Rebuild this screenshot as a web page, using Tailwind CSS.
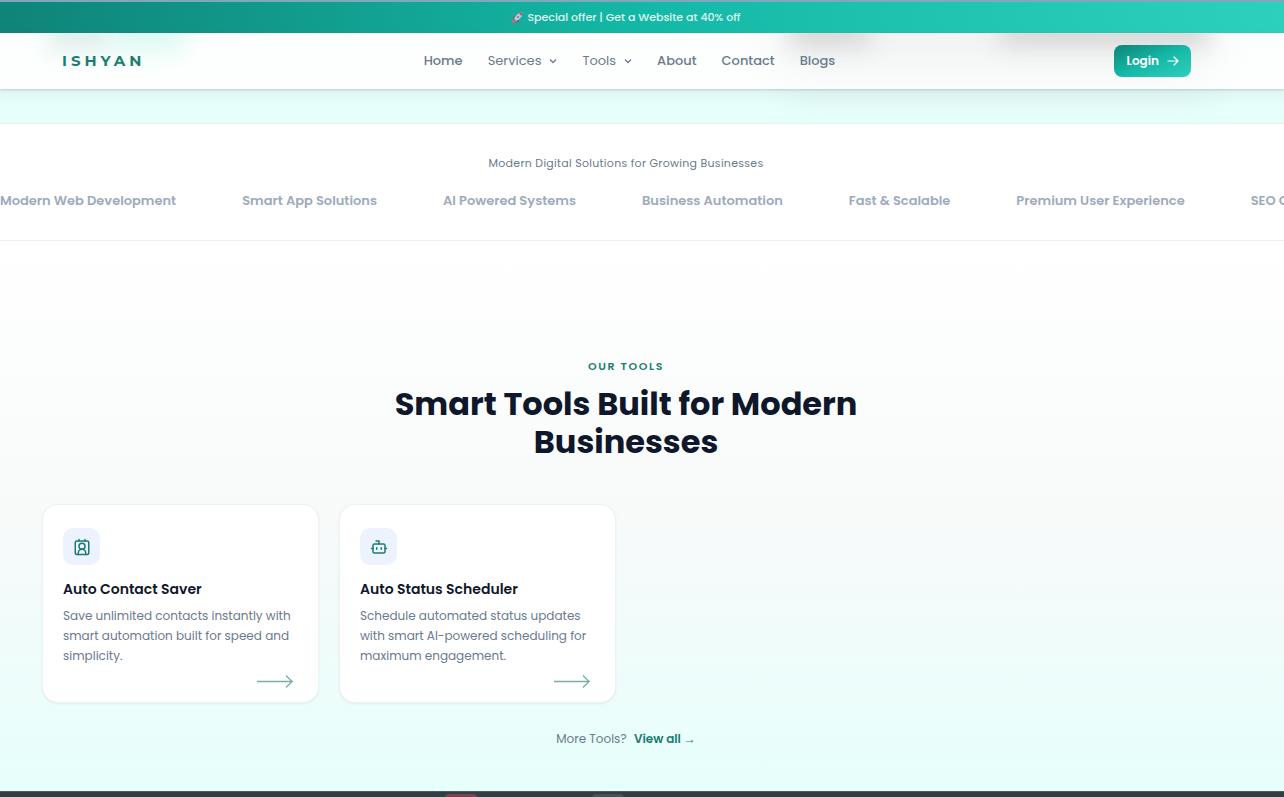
<!DOCTYPE html>
<html lang="en">
<head>
    <meta charset="UTF-8">
    <meta name="viewport" content="width=device-width, initial-scale=1.0">
    <title>ISHYAN</title>
    <script src="https://cdn.jsdelivr.net/npm/@tailwindcss/browser@4"></script>
</head>
<body class="font-[Poppins,Inter,sans-serif] bg-[#e6fffb] text-[#6b7a8d] overflow-x-hidden">
    <!-- Offer bar -->
    <div class="h-[33px] border-t-2 border-[#7ba9bd] bg-linear-to-r from-[#0f8478] via-[#14b8a6] to-[#2dd0bd] text-white/85 text-[11px] font-medium pr-8 flex items-center justify-center gap-1">
        <svg class="size-3" viewBox="0 0 24 24" aria-hidden="true">
            <path d="M3 12 9 7l8 8-5 7-2-6-4-3z" fill="#b0355c"/>
            <path d="M23 1c-8 0-13 5-17 12l5 5c7-4 12-9 12-17z" fill="#b9c8d6"/>
            <path d="M23 1c-3 0-5 1-7 2l5 5c1-2 2-4 2-7z" fill="#cf4866"/>
            <circle cx="14" cy="10" r="2" fill="#4d8fb0"/>
            <path d="M5 15c-3 1-3 4-4 8 4-1 7-1 8-4z" fill="#d8607c"/>
        </svg>
        <span>Special offer | Get a Website at 40% off</span>
    </div>

    <!-- Navbar -->
    <header class="relative z-10 h-14 bg-[#fcfffe] shadow-sm shadow-teal-900/15">
        <div class="absolute inset-0 overflow-hidden" aria-hidden="true">
            <div class="absolute left-12 -top-4 w-16 h-8 bg-[#dbeeea] blur-md"></div>
            <div class="absolute left-28 -top-4 w-18 h-8 bg-[#d8f8f1] blur-md"></div>
            <div class="absolute left-[780px] -top-8 w-[430px] h-16 bg-[#f0f2f2] blur-xl"></div>
            <div class="absolute left-[790px] -top-4 w-20 h-7 bg-[#d4d4d4] blur-md"></div>
            <div class="absolute left-[1000px] -top-4 w-52 h-7 bg-[#d4d4d4] blur-md"></div>
        </div>
        <div class="relative h-full pl-[62px] pr-[93px] flex items-center justify-between">
            <a href="#" class="w-[120px] font-[Montserrat,Lato,sans-serif] font-bold text-[15px] tracking-[4px] text-[#1c7c70]">ISHYAN</a>
            <nav class="flex items-center gap-[25px] text-[13px] font-medium">
                <a href="#">Home</a>
                <button class="flex items-center gap-2 font-normal">Services
                    <svg class="size-2" viewBox="0 0 8 8" fill="none" stroke="currentColor" stroke-width="1.3"><path d="M1 2.500 4 5.500 7 2.500"/></svg>
                </button>
                <button class="flex items-center gap-2 font-normal">Tools
                    <svg class="size-2" viewBox="0 0 8 8" fill="none" stroke="currentColor" stroke-width="1.3"><path d="M1 2.500 4 5.500 7 2.500"/></svg>
                </button>
                <a href="#">About</a>
                <a href="#">Contact</a>
                <a href="#">Blogs</a>
            </nav>
            <div class="w-[114px] flex justify-end">
                <a href="#" class="h-8 px-3 rounded-lg bg-linear-to-br from-[#0f8478] via-[#14b8a6] to-[#2dd0bd] text-white text-xs font-semibold flex items-center gap-2">Login
                    <svg class="size-3" viewBox="0 0 12 12" fill="none" stroke="currentColor" stroke-width="1.2" stroke-linecap="round" stroke-linejoin="round"><path d="M1 6h10M7 2l4 4-4 4"/></svg>
                </a>
            </div>
        </div>
    </header>

    <!-- Bottom edge of the hero -->
    <div class="relative h-[34px] overflow-hidden">
        <div class="absolute left-[790px] -top-6 w-[420px] h-7 bg-[#d6ece8] blur-lg"></div>
        <div class="h-4 bg-linear-to-b from-[#dff5f1] to-transparent"></div>
    </div>

    <!-- Solutions strip -->
    <section class="h-[118px] bg-white border-y border-slate-200/70 pt-[31px] overflow-hidden">
        <p class="pr-8 text-center text-[11px] leading-4 tracking-wide">Modern Digital Solutions for Growing Businesses</p>
        <div class="mt-5 flex gap-[66px] whitespace-nowrap text-[13px] leading-5 font-semibold text-[#9dabbd]">
            <span>Modern Web Development</span>
            <span>Smart App Solutions</span>
            <span>AI Powered Systems</span>
            <span>Business Automation</span>
            <span>Fast &amp; Scalable</span>
            <span>Premium User Experience</span>
            <span>SEO Optimized</span>
        </div>
    </section>

    <!-- Tools -->
    <section class="h-[550px] pt-[117px] bg-linear-to-b from-white via-[#f8fafa] to-[#e6fffb]">
        <div class="pr-8 text-center">
            <p class="text-[11px] leading-4 font-semibold tracking-[0.15em] text-[#1c7c70]">OUR TOOLS</p>
            <h2 class="mt-[11px] mx-auto max-w-[500px] text-[32px] leading-[38px] font-bold text-slate-900">Smart Tools Built for Modern Businesses</h2>
        </div>
        <div class="mt-[43px] pl-[42px] pr-[74px] grid grid-cols-4 gap-5">
            <a href="#" class="h-[199px] bg-white border border-slate-200/60 rounded-2xl shadow-sm shadow-black/5 px-5 pt-[23px] flex flex-col">
                <span class="size-[37px] rounded-[10px] bg-[#edf2ff] text-[#1c7c70] flex items-center justify-center">
                    <svg class="size-[18px]" viewBox="0 0 24 24" fill="none" stroke="currentColor" stroke-width="2" stroke-linejoin="round" stroke-linecap="round"><rect x="3" y="4" width="18" height="18" rx="2"/><path d="M8 2v2M16 2v2M7 22v-2a5 5 0 0 1 10 0v2"/><circle cx="12" cy="11" r="4"/></svg>
                </span>
                <h3 class="mt-[14px] text-sm leading-5 font-semibold text-slate-900">Auto Contact Saver</h3>
                <p class="mt-[7px] text-xs leading-5">Save unlimited contacts instantly with smart automation built for speed and simplicity.</p>
                <svg class="mt-2 mr-1 w-[38px] h-[14px] self-end text-[#1c7c70]/60" viewBox="0 0 38 14" fill="none" stroke="currentColor" stroke-width="1.3"><path d="M1 7.500h36M30 1.500l6 6-6 6"/></svg>
            </a>
            <a href="#" class="h-[199px] bg-white border border-slate-200/60 rounded-2xl shadow-sm shadow-black/5 px-5 pt-[23px] flex flex-col">
                <span class="size-[37px] rounded-[10px] bg-[#edf2ff] text-[#1c7c70] flex items-center justify-center">
                    <svg class="size-[18px]" viewBox="0 0 24 24" fill="none" stroke="currentColor" stroke-width="2" stroke-linejoin="round" stroke-linecap="round"><path d="M12 8V4H8"/><rect x="4" y="8" width="16" height="12" rx="2"/><path d="M2 14h2M20 14h2M15 13v2M9 13v2"/></svg>
                </span>
                <h3 class="mt-[14px] text-sm leading-5 font-semibold text-slate-900">Auto Status Scheduler</h3>
                <p class="mt-[7px] text-xs leading-5">Schedule automated status updates with smart AI-powered scheduling for maximum engagement.</p>
                <svg class="mt-2 mr-1 w-[38px] h-[14px] self-end text-[#1c7c70]/60" viewBox="0 0 38 14" fill="none" stroke="currentColor" stroke-width="1.3"><path d="M1 7.500h36M30 1.500l6 6-6 6"/></svg>
            </a>
        </div>
        <p class="mt-[26px] pr-8 text-center text-xs leading-5">More Tools? <a href="#" class="ml-1 font-semibold text-[#1c7c70]">View all <span class="font-['Liberation_Sans',sans-serif] font-normal">→</span></a></p>
    </section>

    <!-- Dock -->
    <footer class="h-[6px] bg-[#343c44] border-t border-[#4a5f5c] overflow-hidden flex pl-[445px] pt-[2px] gap-[115px]">
        <span class="w-8 h-2 rounded-t-sm bg-[#7c4450]"></span>
        <span class="w-8 h-2 rounded-t-sm bg-[#4a4f58]"></span>
    </footer>
</body>
</html>
